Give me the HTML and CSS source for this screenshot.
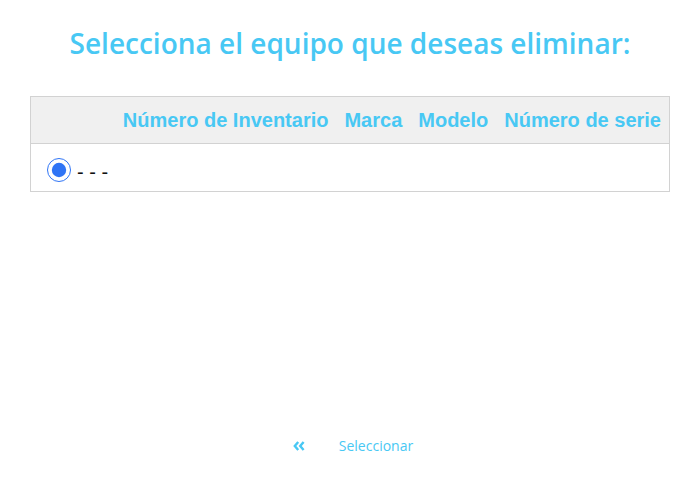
FILE: index.html
```html
<!DOCTYPE html>
<html lang="es">
<head>
<meta charset="utf-8">
<title>Eliminar equipo</title>
<link rel="stylesheet" href="styles.css">
</head>
<body>
<div class="page">
  <h1 class="title">Selecciona el equipo que deseas eliminar:</h1>
  <table class="grid">
    <thead>
      <tr>
        <th class="sel"></th>
        <th>Número de Inventario</th>
        <th>Marca</th>
        <th>Modelo</th>
        <th>Número de serie</th>
      </tr>
    </thead>
    <tbody>
      <tr>
        <td class="sel" colspan="5">
          <label class="opt"><input type="radio" name="eq" checked><span class="dash">- - -</span></label>
        </td>
      </tr>
    </tbody>
  </table>
  <div class="actions">
    <button class="back" type="button" aria-label="Atrás">
      <svg width="12" height="10" viewBox="0 0 12 10"><path d="M5.2 1 L1.8 5 L5.2 9 M10.6 1 L7.2 5 L10.6 9" fill="none" stroke="#48c8f4" stroke-width="2.4"/></svg>
    </button>
    <button class="select" type="button">Seleccionar</button>
  </div>
</div>
</body>
</html>
```

FILE: styles.css
```css
html, body { margin: 0; padding: 0; background: #fff; }
.page {
  width: 700px;
  height: 498px;
  box-sizing: border-box;
  padding: 23px 30px 0 30px;
  display: flex;
  flex-direction: column;
  align-items: stretch;
}
.title {
  margin: 0;
  text-align: center;
  font-family: "Open Sans", "Noto Sans", sans-serif;
  font-weight: 600;
  font-size: 28px;
  line-height: 40px;
  color: #48c8f4;
}
.grid {
  margin-top: 33px;
  width: 640px;
  border-collapse: collapse;
  border: 1px solid #d2d2d2;
  font-family: "Liberation Sans", Arial, sans-serif;
}
.grid thead tr { background: #f0f0f0; }
.grid th {
  height: 46px;
  padding: 0 8px;
  font-size: 20px;
  font-weight: bold;
  color: #48c8f4;
  text-align: left;
  white-space: nowrap;
  border-bottom: 1px solid #d2d2d2;
}
.grid th.sel { width: 100%; }
.grid td {
  height: 48px;
  padding: 5px 16px 0 16px;
  box-sizing: border-box;
}
.opt {
  display: flex;
  align-items: center;
  font-size: 20px;
  color: #111;
}
.opt input {
  width: 24px;
  height: 24px;
  margin: 0 6px 0 0;
  accent-color: #2f74f5;
}
.dash { position: relative; top: 2px; }
.actions {
  margin-top: 244px;
  padding-left: 6px;
  display: flex;
  justify-content: center;
  align-items: center;
  gap: 34px;
}
.actions button {
  background: none;
  border: none;
  padding: 0;
  cursor: pointer;
}
.back { display: flex; align-items: center; }
.select {
  font-family: "Open Sans", "Noto Sans", sans-serif;
  font-size: 14px;
  color: #48c8f4;
}
```
